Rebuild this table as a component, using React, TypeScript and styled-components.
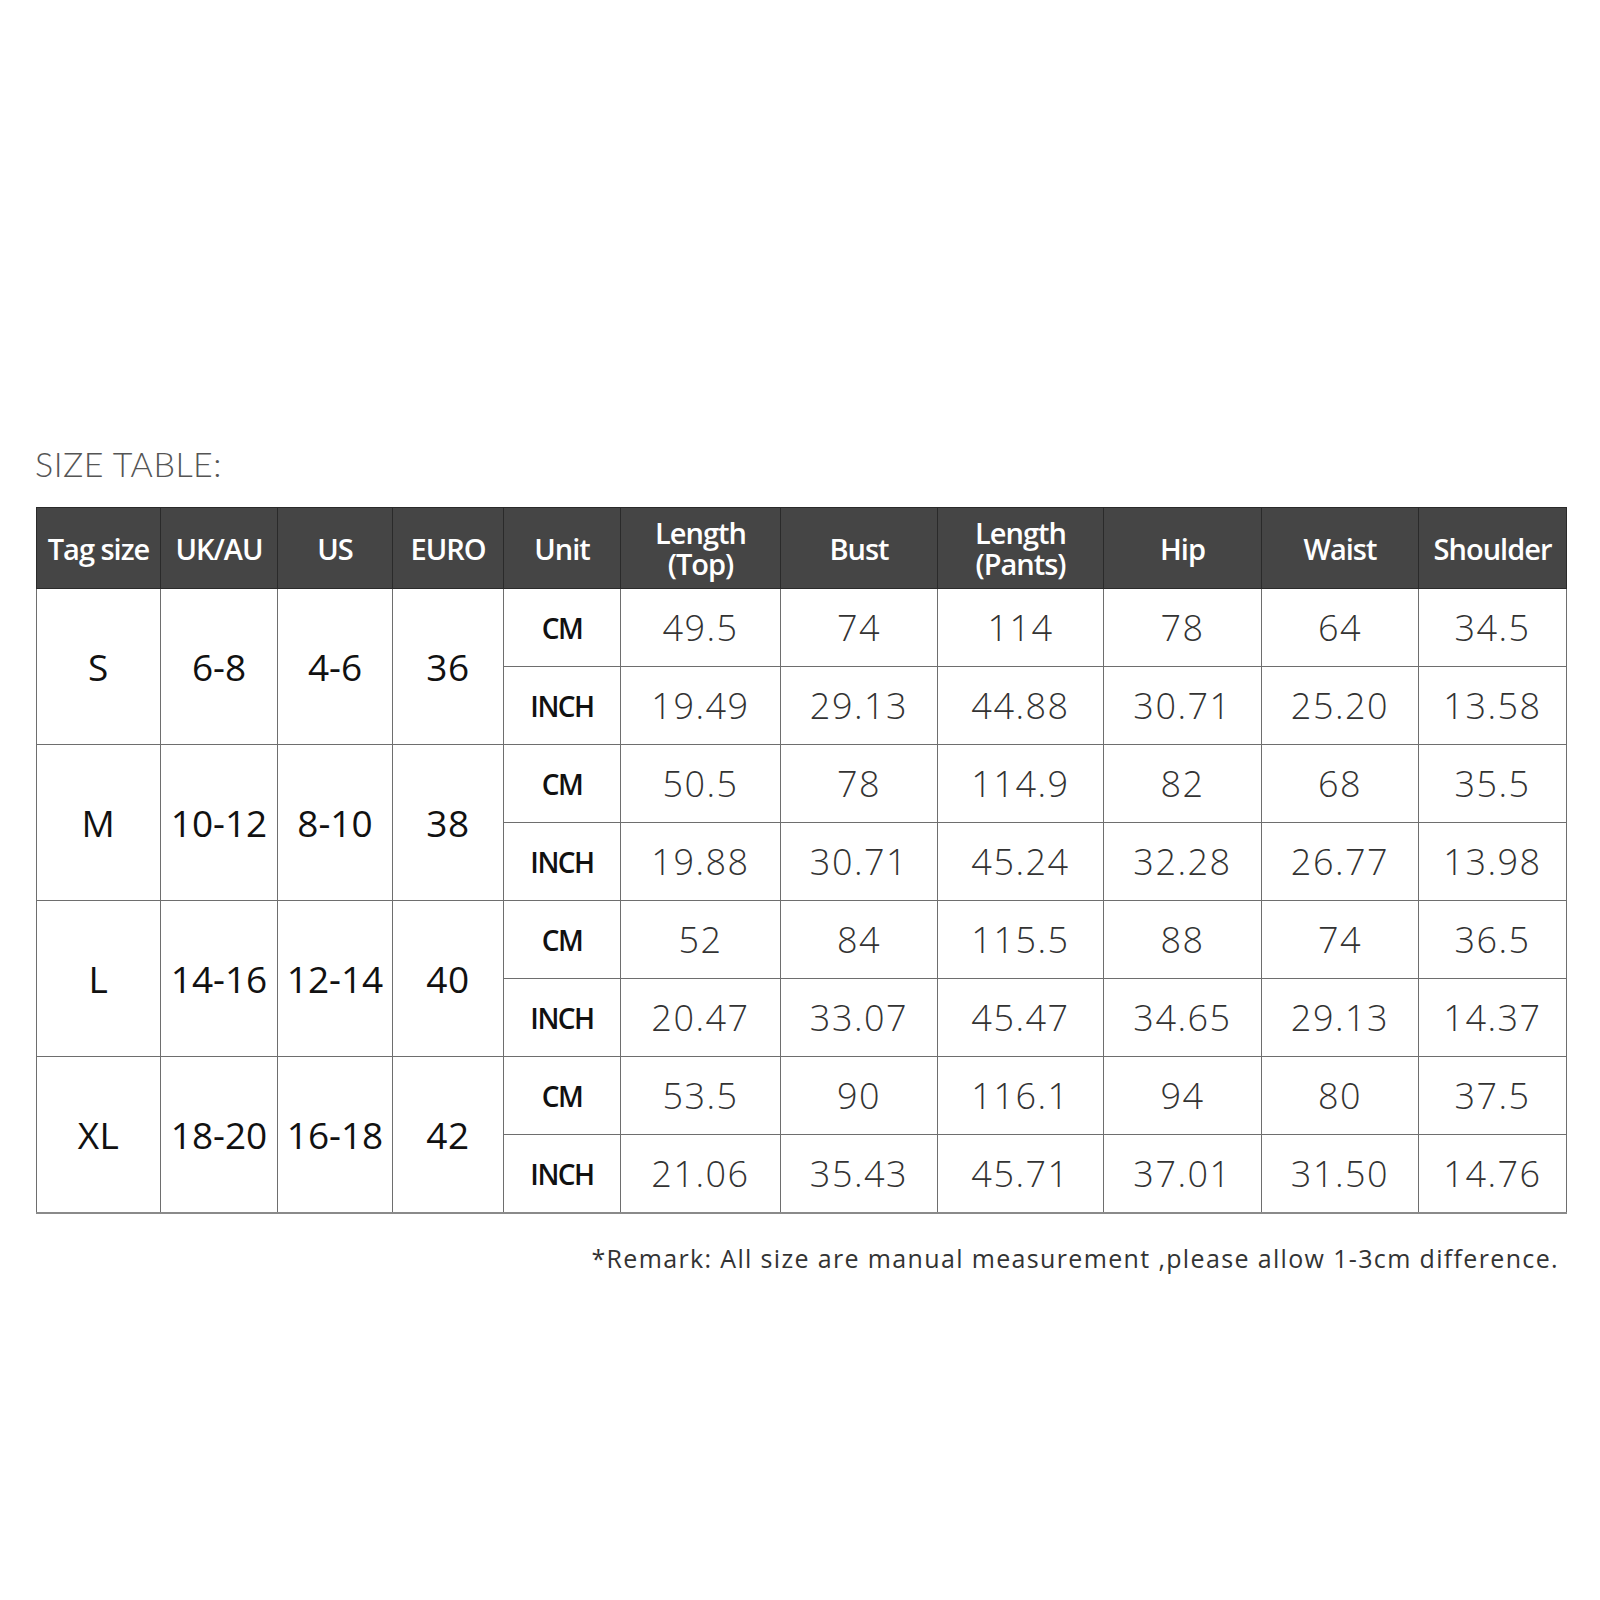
import React from "react";
import styled, { createGlobalStyle } from "styled-components";

const GlobalStyle = createGlobalStyle`
  html, body {
    margin: 0;
    padding: 0;
    background: #ffffff;
  }
  body {
    font-family: "Open Sans", "Liberation Sans", sans-serif;
  }
`;

type SizeRow = {
  tag: string;
  uk: string;
  us: string;
  euro: string;
  cm: string[];
  inch: string[];
};

const COLUMN_WIDTHS = [124, 117, 115, 111, 117, 160, 157, 166, 158, 157, 148];

const HEADERS = [
  "Tag size",
  "UK/AU",
  "US",
  "EURO",
  "Unit",
  "Length\n(Top)",
  "Bust",
  "Length\n(Pants)",
  "Hip",
  "Waist",
  "Shoulder",
];

const ROWS: SizeRow[] = [
  {
    tag: "S",
    uk: "6-8",
    us: "4-6",
    euro: "36",
    cm: ["49.5", "74", "114", "78", "64", "34.5"],
    inch: ["19.49", "29.13", "44.88", "30.71", "25.20", "13.58"],
  },
  {
    tag: "M",
    uk: "10-12",
    us: "8-10",
    euro: "38",
    cm: ["50.5", "78", "114.9", "82", "68", "35.5"],
    inch: ["19.88", "30.71", "45.24", "32.28", "26.77", "13.98"],
  },
  {
    tag: "L",
    uk: "14-16",
    us: "12-14",
    euro: "40",
    cm: ["52", "84", "115.5", "88", "74", "36.5"],
    inch: ["20.47", "33.07", "45.47", "34.65", "29.13", "14.37"],
  },
  {
    tag: "XL",
    uk: "18-20",
    us: "16-18",
    euro: "42",
    cm: ["53.5", "90", "116.1", "94", "80", "37.5"],
    inch: ["21.06", "35.43", "45.71", "37.01", "31.50", "14.76"],
  },
];

const App = () => {
  return (
    <>
      <GlobalStyle />
      <Page>
        <Title>SIZE TABLE:</Title>
        <Table>
          <colgroup>
            {COLUMN_WIDTHS.map((w, i) => (
              <col key={i} style={{ width: w }} />
            ))}
          </colgroup>
          <thead>
            <tr>
              {HEADERS.map((h) => (
                <HeadCell key={h}>{h}</HeadCell>
              ))}
            </tr>
          </thead>
          <tbody>
            {ROWS.map((row) => (
              <React.Fragment key={row.tag}>
                <tr>
                  <SizeCell rowSpan={2}>{row.tag}</SizeCell>
                  <SizeCell rowSpan={2} $tight>
                    {row.uk}
                  </SizeCell>
                  <SizeCell rowSpan={2} $tight>
                    {row.us}
                  </SizeCell>
                  <SizeCell rowSpan={2}>{row.euro}</SizeCell>
                  <UnitCell>CM</UnitCell>
                  {row.cm.map((v, i) => (
                    <ValueCell key={i}>{v}</ValueCell>
                  ))}
                </tr>
                <tr>
                  <UnitCell>INCH</UnitCell>
                  {row.inch.map((v, i) => (
                    <ValueCell key={i}>{v}</ValueCell>
                  ))}
                </tr>
              </React.Fragment>
            ))}
          </tbody>
        </Table>
        <Remark>
          *Remark: All size are manual measurement ,please allow 1-3cm
          difference.
        </Remark>
      </Page>
    </>
  );
};

export default App;

const Page = styled.div`
  width: 1600px;
  height: 1600px;
  box-sizing: border-box;
  padding: 443px 34px 0 36px;
  display: flex;
  flex-direction: column;
`;

const Title = styled.div`
  font-family: "Lato", "Liberation Sans", sans-serif;
  font-weight: 300;
  font-size: 34px;
  line-height: 42px;
  color: #555555;
  letter-spacing: 0.5px;
  margin-bottom: 22px;
  margin-left: -1px;
`;

const Table = styled.table`
  width: 1530px;
  table-layout: fixed;
  border-collapse: collapse;
  border-bottom: 2px solid #8a8a8a;
`;

const HeadCell = styled.th`
  height: 80px;
  padding: 0;
  background: #454545;
  color: #ffffff;
  border: 1px solid #2a2a2a;
  font-family: "Open Sans", "Liberation Sans", sans-serif;
  font-weight: 600;
  font-size: 29px;
  line-height: 31px;
  letter-spacing: -1px;
  white-space: pre-line;
  text-align: center;
  vertical-align: middle;
`;

const BodyCell = styled.td`
  height: 77px;
  padding: 0;
  border: 1.5px solid #6e6e6e;
  text-align: center;
  vertical-align: middle;
  color: #222222;
  white-space: nowrap;
`;

const SizeCell = styled(BodyCell)<{ $tight?: boolean }>`
  font-weight: 500;
  font-size: 37px;
  letter-spacing: ${({ $tight }) => ($tight ? "0px" : "0.5px")};
  color: #111111;
`;

const UnitCell = styled(BodyCell)`
  font-weight: 600;
  font-size: 28px;
  letter-spacing: -1.5px;
  color: #111111;
`;

const ValueCell = styled(BodyCell)`
  font-weight: 300;
  font-size: 36px;
  letter-spacing: 1.5px;
  color: #333333;
`;

const Remark = styled.div`
  align-self: flex-end;
  margin-top: 29px;
  margin-right: 7px;
  font-size: 25px;
  line-height: 30px;
  letter-spacing: 1.35px;
  color: #333333;
`;
